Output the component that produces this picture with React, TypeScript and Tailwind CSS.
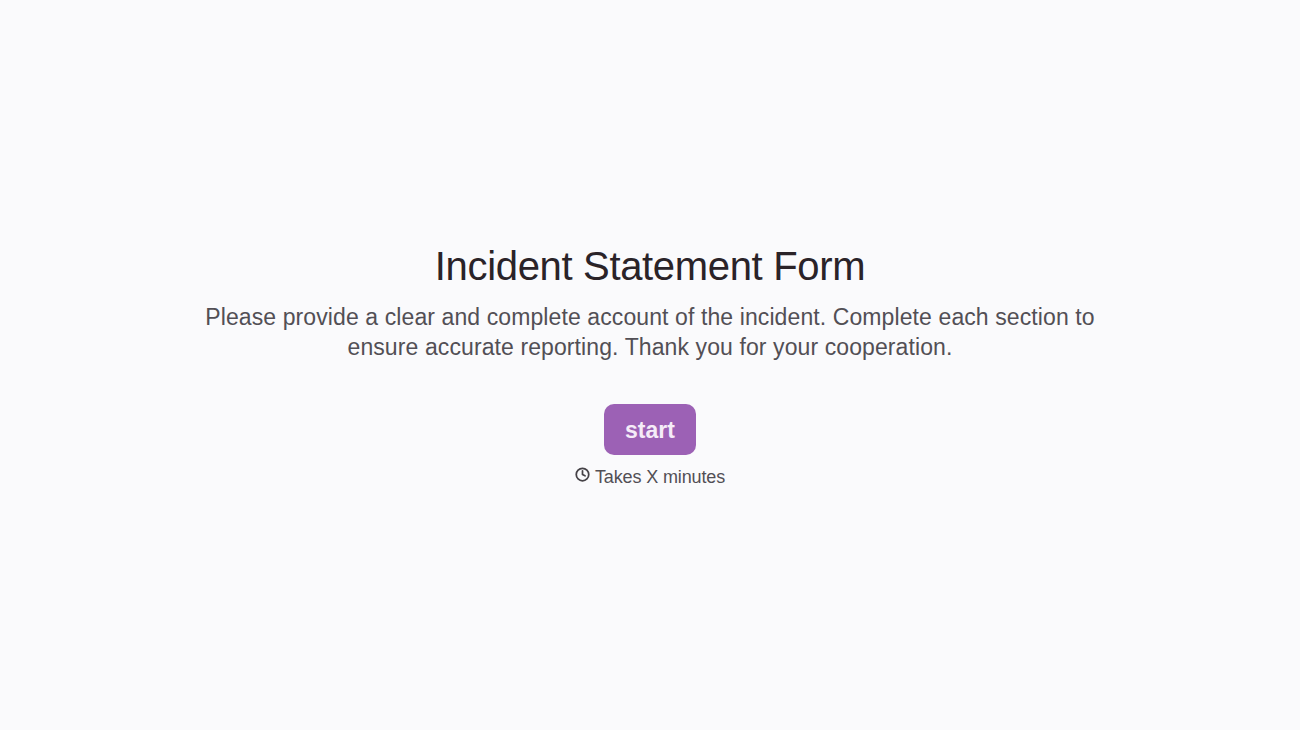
import { Clock } from "lucide-react";

export default function App() {
  return (
    <div className="flex h-[730px] w-full flex-col items-center justify-center bg-[#fafafc] pt-[1px] font-['Liberation_Sans',Arial,sans-serif]">
      <div className="flex flex-col items-center text-center">
        <h1 className="text-[40px] leading-[50px] font-normal tracking-[-0.33px] text-[#2a2328]">Incident Statement Form</h1>
        <p className="mt-[11px] w-[900px] text-[23px] leading-[30px] tracking-[0.1px] text-[#524f55]">
          Please provide a clear and complete account of the incident. Complete each section to ensure accurate reporting. Thank you for your cooperation.
        </p>
        <button className="mt-[42px] flex h-[51px] w-[92px] items-center justify-center rounded-[10px] bg-[#9c61b5] pt-[2px] text-[23px] font-bold text-[#f5ecf8]">start</button>
        <div className="mt-[9px] flex items-center gap-[5px] text-[18px] leading-[26px] tracking-[-0.13px] text-[#524f55]">
          <Clock className="h-[15px] w-[15px] -translate-y-[3px] text-[#454247]" strokeWidth={2.8} />
          <span>Takes X minutes</span>
        </div>
      </div>
    </div>
  );
}
